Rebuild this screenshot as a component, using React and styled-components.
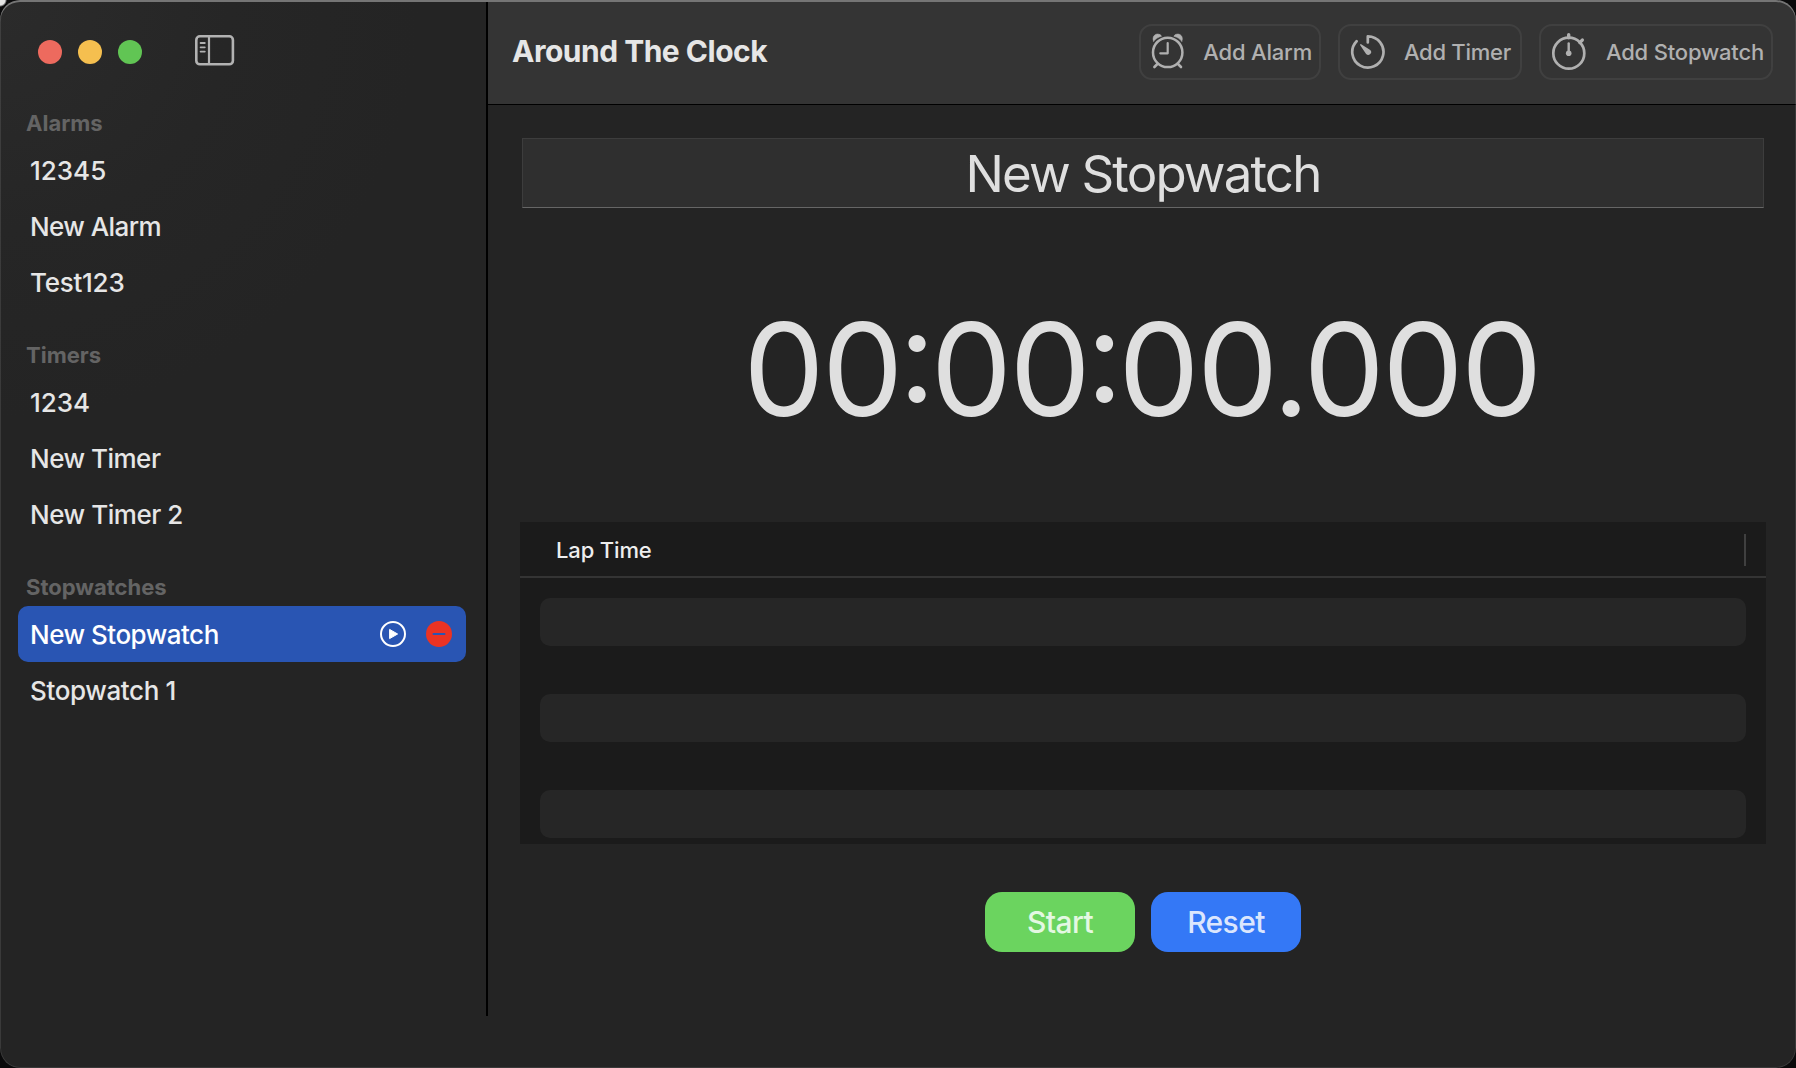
import React from "react";
import styled, { createGlobalStyle } from "styled-components";

const Global = createGlobalStyle`
  * { box-sizing: border-box; }
  body {
    margin: 0;
    background: radial-gradient(circle at 0 0, #e4e4e4 0, #e4e4e4 5px, #0a0a0b 7px);
    overflow: hidden;
    font-family: Inter, "Liberation Sans", sans-serif;
  }
`;

const Window = styled.div`
  display: flex;
  width: 1796px;
  height: 1068px;
  overflow: hidden;
  border-radius: 20px;
  background: #242424;
  position: relative;
  &::after {
    content: "";
    position: absolute;
    inset: 0;
    border-radius: 20px;
    pointer-events: none;
    box-shadow: inset 0 2px 0 #757575, inset 0 0 0 1px rgba(255, 255, 255, 0.1);
  }
`;

const Sidebar = styled.aside`
  width: 488px;
  height: 1016px;
  flex: none;
  border-right: 2px solid #000;
  background: radial-gradient(circle at 0 0, #2b2b2b 0, #262626 230px, #242424 420px);
`;

const TitleBar = styled.div`
  display: flex;
  align-items: flex-start;
  height: 78px;
  padding: 26px 38px 0;
`;

const Lights = styled.div`
  display: flex;
  gap: 16px;
  padding-top: 14px;
  margin-right: 53px;
`;

const Light = styled.span`
  width: 24px;
  height: 24px;
  border-radius: 50%;
  background: ${(p) => p.$color};
`;

const ToggleIcon = styled.svg`
  margin-top: 9px;
`;

const SectionTitle = styled.h2`
  margin: 0;
  height: 64px;
  padding: 31px 0 0 26px;
  font-size: 22px;
  line-height: 28px;
  font-weight: 700;
  letter-spacing: 0;
  color: #646464;
`;

const Item = styled.div`
  display: flex;
  align-items: center;
  height: 56px;
  margin: 0 20px 0 18px;
  padding: 0 14px 0 12px;
  border-radius: 10px;
  font-size: 26px;
  font-weight: 500;
  letter-spacing: ${(p) => p.$track || 0}px;
  color: ${(p) => (p.$selected ? "#fff" : "#e6e6e6")};
  background: ${(p) => (p.$selected ? "#2955b3" : "transparent")};
`;

const ItemLabel = styled.span`
  flex: 1;
  white-space: nowrap;
`;

const ItemActions = styled.span`
  display: flex;
  gap: 20px;
`;

const Main = styled.main`
  flex: 1;
  display: flex;
  flex-direction: column;
`;

const Toolbar = styled.header`
  display: flex;
  align-items: center;
  height: 105px;
  padding: 0 23px 0 24px;
  border-bottom: 1px solid #000;
  background: #343434;
`;

const AppTitle = styled.h1`
  flex: 1;
  margin: 0;
  padding-bottom: 2px;
  font-size: 30px;
  font-weight: 700;
  letter-spacing: -0.5px;
  color: #e6e6e6;
`;

const ToolGroup = styled.div`
  display: flex;
  gap: 17px;
`;

const ToolButton = styled.button`
  display: flex;
  align-items: center;
  justify-content: space-between;
  width: ${(p) => p.$width}px;
  height: 56px;
  padding: 0 ${(p) => p.$end}px 0 8px;
  border: 2px solid #404040;
  border-radius: 13px;
  background: transparent;
  font: 450 22px Inter, sans-serif;
  letter-spacing: ${(p) => p.$track}px;
  color: #b0b0b0;
  white-space: nowrap;
`;

const Content = styled.section`
  flex: 1;
  display: flex;
  flex-direction: column;
  align-items: center;
  padding: 33px 30px 0 32px;
`;

const NameField = styled.div`
  display: flex;
  align-items: center;
  justify-content: center;
  width: 1242px;
  height: 70px;
  border: 1px solid #3d3d3d;
  border-bottom-color: #666;
  background: #2f2f2f;
  font-size: 51px;
  font-weight: 400;
  letter-spacing: -1.85px;
  color: #dfdfdf;
`;

const Clock = styled.div`
  display: flex;
  align-items: center;
  justify-content: center;
  height: 314px;
  padding: 8px 3px 0 0;
  font-size: 129px;
  letter-spacing: -2.7px;
  color: #dfdfdf;
  white-space: nowrap;
`;

const Colon = styled.span`
  margin: 0 -2.2px;
  font-feature-settings: "case";
`;

const LapTable = styled.div`
  width: 1246px;
  height: 322px;
  background: #1b1b1b;
`;

const LapHeader = styled.div`
  display: flex;
  align-items: center;
  justify-content: space-between;
  height: 56px;
  padding: 2px 20px 0 36px;
  border-bottom: 2px solid #343434;
  font-size: 22px;
  font-weight: 500;
  letter-spacing: -0.15px;
  color: #eee;
`;

const ColumnGrip = styled.span`
  width: 2px;
  height: 32px;
  background: #404040;
`;

const LapRows = styled.div`
  display: grid;
  gap: 48px;
  padding: 20px 20px 0;
`;

const LapRow = styled.div`
  height: 48px;
  border-radius: 10px;
  background: #262626;
`;

const Actions = styled.div`
  display: flex;
  gap: 16px;
  padding-top: 48px;
`;

const ActionButton = styled.button`
  width: 150px;
  height: 60px;
  padding: 0;
  border: 0;
  border-radius: 17px;
  background: ${(p) => p.$color};
  color: ${(p) => p.$ink};
  font: 450 30px Inter, sans-serif;
  letter-spacing: -0.6px;
`;

const AlarmIcon = () => (
  <svg width="36" height="40" viewBox="0 0 36 40" fill="none" stroke="#b0b0b0" strokeLinecap="round">
    <circle cx="18.7" cy="20.4" r="14.7" strokeWidth="2.5" />
    <path d="M18.7 11v10.3h-7.4" strokeWidth="2.2" strokeLinejoin="round" />
    <path d="M8.4 32l-3 3M29 32l3 3" strokeWidth="2.6" />
    <path
      d="M4.6 9.2C3 6 5 2.1 8.5 2.1c2 0 3.5.9 4 2.2C9.2 5 6.6 6.8 4.6 9.2zM32.8 9.2c1.6-3.2-.4-7.1-3.9-7.1-2 0-3.5.9-4 2.2 3.3.7 5.9 2.5 7.9 4.9z"
      fill="#b0b0b0"
      stroke="#b0b0b0"
      strokeWidth="0.6"
    />
  </svg>
);

const TimerIcon = () => (
  <svg width="38" height="40" viewBox="0 0 38 40" fill="none">
    <path d="M19.8 10.4V4.4A15.6 15.6 0 1 1 8.6 9.2" stroke="#b0b0b0" strokeWidth="2.7" strokeLinecap="round" strokeLinejoin="round" />
    <path d="M13.2 12.2L22.2 17.9A2.9 2.9 0 1 1 18.1 22L12.2 13.2Q11.9 11.6 13.2 12.2z" fill="#b0b0b0" />
  </svg>
);

const StopwatchIcon = () => (
  <svg width="38" height="40" viewBox="0 0 38 40" fill="none" stroke="#b0b0b0">
    <circle cx="19.8" cy="21.2" r="15.5" strokeWidth="2.7" />
    <path d="M19.7 2.7v3" strokeWidth="3.4" strokeLinecap="round" />
    <path d="M30.8 10.6l2.6-2.6" strokeWidth="3.2" strokeLinecap="round" />
    <path d="M19.7 11.4v10" strokeWidth="2.4" strokeLinecap="round" />
    <circle cx="19.7" cy="21.3" r="2.8" fill="#b0b0b0" stroke="none" />
  </svg>
);

const PlayIcon = () => (
  <svg width="26" height="26" viewBox="0 0 26 26">
    <circle cx="13" cy="13" r="12" fill="none" stroke="#fff" strokeWidth="2" />
    <path d="M9.6 8.4v9.2l8-4.6z" fill="#fff" stroke="#fff" strokeLinejoin="round" />
  </svg>
);

const RemoveIcon = () => (
  <svg width="26" height="26" viewBox="0 0 26 26">
    <circle cx="13" cy="13" r="13" fill="#ea3323" />
    <path d="M7.5 13h11" stroke="#2955b3" strokeWidth="2" strokeLinecap="round" />
  </svg>
);

const sections = [
  {
    title: "Alarms",
    items: [{ name: "12345" }, { name: "New Alarm", track: -0.57 }, { name: "Test123", track: -0.25 }],
  },
  {
    title: "Timers",
    items: [{ name: "1234" }, { name: "New Timer", track: -0.5 }, { name: "New Timer 2", track: -0.45 }],
  },
  {
    title: "Stopwatches",
    items: [
      { name: "New Stopwatch", track: -0.5, selected: true },
      { name: "Stopwatch 1", track: -0.36 },
    ],
  },
];

const tools = [
  { label: "Add Alarm", width: 182, track: -0.2, end: 7, Icon: AlarmIcon },
  { label: "Add Timer", width: 184, track: -0.25, end: 9, Icon: TimerIcon },
  { label: "Add Stopwatch", width: 234, track: -0.18, end: 7, Icon: StopwatchIcon },
];

export default function App() {
  return (
    <>
      <Global />
      <Window>
        <Sidebar>
          <TitleBar>
            <Lights>
              <Light $color="#ed6a5e" />
              <Light $color="#f5bf4f" />
              <Light $color="#61c554" />
            </Lights>
            <ToggleIcon width="40" height="32" viewBox="0 0 40 32" fill="none" stroke="#b2b2b2">
              <rect x="1.3" y="1.3" width="36.6" height="28" rx="3.6" strokeWidth="2.6" />
              <path d="M14 1v28" strokeWidth="2.2" />
              <path d="M5.6 8h4.2M5.6 12.3h4.2M5.6 16.6h4.2" strokeWidth="1.8" strokeLinecap="round" />
            </ToggleIcon>
          </TitleBar>
          {sections.map((s) => (
            <React.Fragment key={s.title}>
              <SectionTitle>{s.title}</SectionTitle>
              {s.items.map(({ name, track, selected }) => (
                <Item key={name} $track={track} $selected={selected}>
                  <ItemLabel>{name}</ItemLabel>
                  {selected && (
                    <ItemActions>
                      <PlayIcon />
                      <RemoveIcon />
                    </ItemActions>
                  )}
                </Item>
              ))}
            </React.Fragment>
          ))}
        </Sidebar>
        <Main>
          <Toolbar>
            <AppTitle>Around The Clock</AppTitle>
            <ToolGroup>
              {tools.map(({ label, width, track, end, Icon }) => (
                <ToolButton key={label} $width={width} $track={track} $end={end}>
                  <Icon />
                  {label}
                </ToolButton>
              ))}
            </ToolGroup>
          </Toolbar>
          <Content>
            <NameField>New Stopwatch</NameField>
            <Clock>
              00<Colon>:</Colon>00<Colon>:</Colon>00.000
            </Clock>
            <LapTable>
              <LapHeader>
                Lap Time
                <ColumnGrip />
              </LapHeader>
              <LapRows>
                <LapRow />
                <LapRow />
                <LapRow />
              </LapRows>
            </LapTable>
            <Actions>
              <ActionButton $color="#6bd45f" $ink="#e4f8e2">Start</ActionButton>
              <ActionButton $color="#3478f6" $ink="#dbe6fd">Reset</ActionButton>
            </Actions>
          </Content>
        </Main>
      </Window>
    </>
  );
}
